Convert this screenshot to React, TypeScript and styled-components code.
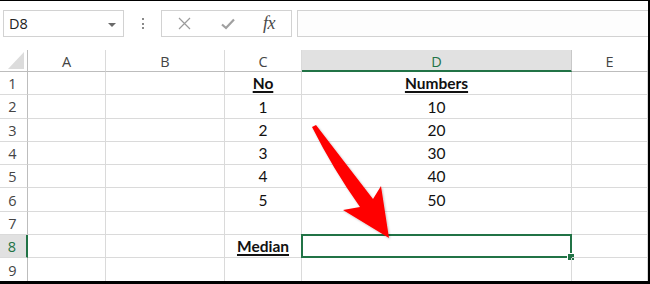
import React from "react";
import styled, { createGlobalStyle, css } from "styled-components";

const Global = createGlobalStyle`
  html, body { margin: 0; padding: 0; background: #fff; }
  * { box-sizing: border-box; }
`;

const GREEN = "#217346";
const GRID = "#dadada";
const HEAD_LINE = "#bdbdbd";

const Frame = styled.div`
  position: relative;
  width: 650px;
  height: 284px;
  border-top: 1px solid #000;
  border-right: 2px solid #000;
  border-bottom: 3px solid #000;
  overflow: hidden;
  background: #fff;
`;

const Toolbar = styled.div`
  display: flex;
  align-items: flex-start;
  height: 49px;
  padding-top: 9px;
`;

const NameBox = styled.div`
  margin-left: 3px;
  width: 121px;
  height: 27px;
  border: 1px solid #d2d2d2;
  display: flex;
  align-items: center;
  justify-content: space-between;
  padding: 0 7px 0 5px;
  font-family: "Open Sans", "Noto Sans", sans-serif;
  font-size: 14.5px;
  color: #222;
`;

const Caret = styled.span`
  width: 0;
  height: 0;
  border-left: 4px solid transparent;
  border-right: 4px solid transparent;
  border-top: 4px solid #6a6a6a;
  margin-top: 2px;
`;

const Grip = styled.div`
  width: 37px;
  height: 27px;
  display: flex;
  flex-direction: column;
  align-items: center;
  justify-content: center;
  gap: 2.5px;
`;

const Dot = styled.span`
  width: 2px;
  height: 2px;
  background: #8a8a8a;
`;

const ButtonGroup = styled.div`
  width: 131px;
  height: 27px;
  border: 1px solid #d2d2d2;
  display: flex;
  align-items: center;
`;

const ToolButton = styled.div<{ $w: number }>`
  width: ${(p) => p.$w}px;
  height: 100%;
  display: flex;
  align-items: center;
  justify-content: center;
`;

const Fx = styled.span`
  font-family: "Liberation Serif", "DejaVu Serif", serif;
  font-style: italic;
  font-size: 18px;
  color: #4a4a4a;
  letter-spacing: -0.5px;
`;

const FormulaBar = styled.div`
  flex: 1;
  margin-left: 5px;
  height: 27px;
  border: 1px solid #d2d2d2;
  border-right: none;
  background: #fdfdfd;
`;

const Sheet = styled.div`
  display: grid;
  grid-template-columns: 28px 78px 119px 77px 270px 1fr;
  grid-template-rows: 22px repeat(9, 23.3px);
`;

const Corner = styled.div`
  border-right: 1px solid ${HEAD_LINE};
  border-bottom: 1px solid ${HEAD_LINE};
  display: flex;
  align-items: flex-end;
  justify-content: flex-end;
  padding: 0 3px 2px 0;
`;

const CornerTri = styled.span`
  width: 16px;
  height: 17px;
  background: #dcdcdc;
  clip-path: polygon(100% 0, 100% 100%, 0 100%);
`;

const headFont = css`
  font-family: "Open Sans", "Noto Sans", sans-serif;
  font-size: 14.5px;
  color: #444;
`;

const ColHead = styled.div<{ $active?: boolean }>`
  ${headFont};
  display: flex;
  align-items: center;
  justify-content: center;
  padding-top: 2px;
  border-right: 1px solid ${GRID};
  border-bottom: 1px solid ${HEAD_LINE};
  ${(p) =>
    p.$active &&
    css`
      background: #e1e1e1;
      color: ${GREEN};
      border-bottom: 2px solid ${GREEN};
      border-right-color: #c8c8c8;
    `}
`;

const RowHead = styled.div<{ $active?: boolean }>`
  ${headFont};
  display: flex;
  align-items: center;
  justify-content: center;
  padding-right: 2px;
  padding-top: 1px;
  border-right: 1px solid ${HEAD_LINE};
  border-bottom: 1px solid ${GRID};
  ${(p) =>
    p.$active &&
    css`
      background: #e1e1e1;
      color: ${GREEN};
      border-right: 2px solid ${GREEN};
    `}
`;

const Cell = styled.div<{ $bold?: boolean }>`
  position: relative;
  display: flex;
  align-items: flex-end;
  justify-content: center;
  padding-bottom: 2px;
  border-right: 1px solid ${GRID};
  border-bottom: 1px solid ${GRID};
  font-family: Lato, "Liberation Sans", sans-serif;
  font-size: 15.5px;
  line-height: 17px;
  color: #111;
  ${(p) =>
    p.$bold &&
    css`
      font-weight: 700;
      text-decoration: underline;
      text-decoration-thickness: 1.5px;
      text-underline-offset: 2px;
    `}
`;

const Selection = styled.div`
  position: absolute;
  top: -1px;
  left: -1px;
  right: -1px;
  bottom: -1px;
  border: 2px solid ${GREEN};
  pointer-events: none;
`;

const Handle = styled.span`
  position: absolute;
  right: -5px;
  bottom: -5px;
  width: 8px;
  height: 8px;
  background: ${GREEN};
  border: 1px solid #fff;
`;

const Overlay = styled.svg`
  position: absolute;
  left: 0;
  top: -1px;
  pointer-events: none;
`;

const cols = ["A", "B", "C", "D", "E"];

type Row = { c?: string; d?: string; bold?: boolean };
const rows: Row[] = [
  { c: "No", d: "Numbers", bold: true },
  { c: "1", d: "10" },
  { c: "2", d: "20" },
  { c: "3", d: "30" },
  { c: "4", d: "40" },
  { c: "5", d: "50" },
  {},
  { c: "Median", bold: true },
  {},
];

export default function App() {
  return (
    <>
      <Global />
      <Frame>
        <Toolbar>
          <NameBox>
            <span>D8</span>
            <Caret />
          </NameBox>
          <Grip>
            <Dot />
            <Dot />
            <Dot />
          </Grip>
          <ButtonGroup>
            <ToolButton $w={44}>
              <svg width="13" height="13" viewBox="0 0 13 13">
                <path d="M1 1 L12 12 M12 1 L1 12" stroke="#9b9b9b" strokeWidth="1.2" fill="none" />
              </svg>
            </ToolButton>
            <ToolButton $w={44}>
              <svg width="14" height="12" viewBox="0 0 14 12">
                <path d="M1 6.5 L5 10 L13 1.5" stroke="#a0a0a0" strokeWidth="2.2" fill="none" />
              </svg>
            </ToolButton>
            <ToolButton $w={38}>
              <Fx>fx</Fx>
            </ToolButton>
          </ButtonGroup>
          <FormulaBar />
        </Toolbar>
        <Sheet>
          <Corner>
            <CornerTri />
          </Corner>
          {cols.map((c) => (
            <ColHead key={c} $active={c === "D"}>
              {c}
            </ColHead>
          ))}
          {rows.map((r, i) => {
            const n = i + 1;
            return (
              <React.Fragment key={n}>
                <RowHead $active={n === 8}>{n}</RowHead>
                <Cell />
                <Cell />
                <Cell $bold={r.bold}>{r.c}</Cell>
                <Cell $bold={r.bold}>
                  {r.d}
                  {n === 8 && (
                    <Selection>
                      <Handle />
                    </Selection>
                  )}
                </Cell>
                <Cell />
              </React.Fragment>
            );
          })}
        </Sheet>
        <Overlay width="650" height="284" viewBox="0 0 650 284">
          <defs>
            <filter id="sh" x="-20%" y="-20%" width="140%" height="140%">
              <feDropShadow dx="1" dy="1" stdDeviation="1" floodColor="#000" floodOpacity="0.25" />
            </filter>
          </defs>
          <path
            d="M312 127 L316 125 Q346 164 373 199 L381 186 L389 238 L343 210 L360 207 Q333 169 312 127 Z"
            fill="#ff0000"
            filter="url(#sh)"
          />
        </Overlay>
      </Frame>
    </>
  );
}
